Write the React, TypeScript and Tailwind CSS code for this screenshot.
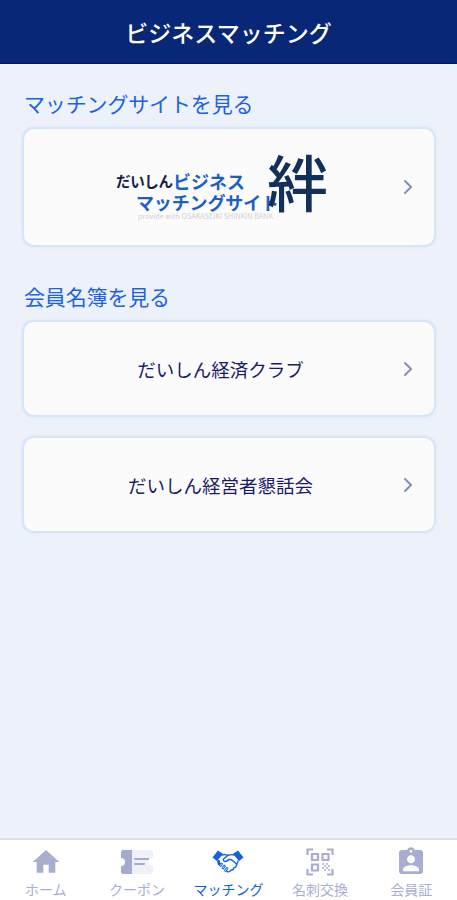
import React from "react";
import { ChevronRight } from "lucide-react";
import { MdHome, MdAssignmentInd } from "react-icons/md";

const CouponIcon = () => (
  <svg width="34" height="26" viewBox="0 0 34 26">
    <path d="M12 1h19a2 2 0 0 1 2 2v6a4 4 0 0 0 0 8v6a2 2 0 0 1-2 2H12z" fill="#eff1f8" />
    <path d="M3 1h9v24H3a2 2 0 0 1-2-2v-6a4 4 0 0 0 0-8V3a2 2 0 0 1 2-2z" fill="#a3acd0" />
    <path d="M15 10h13M15 15h9" stroke="#a3acd0" strokeWidth="2" strokeLinecap="round" />
  </svg>
);

const HandshakeIcon = () => (
  <svg width="32" height="24" viewBox="0 0 32 24" fill="none" stroke="currentColor" strokeLinejoin="round" strokeLinecap="round">
    <path d="M6 .5 11 4 5 11 .5 7.5zM26 .5 21 4l6 7 4.500-3.500z" fill="currentColor" stroke="none" />
    <path d="M10 5c3-1.200 4 .2 6 .2s4-1.200 6-.2" strokeWidth="1.400" />
    <path d="M16 5.200 11.500 9c-.7 1.600.8 3 2.600 2.300L17 9.500c1.500-.4 2.500.2 3.500 1l4.300 3.800" strokeWidth="1.500" />
    <path d="M26 11c-.2 1.500-.7 2.600-1.500 3.500.3 2-1 3-2.500 3.200-.5 1.800-1.700 2.500-3 2.500-1 1.500-2.500 2-4 1.300" strokeWidth="1.400" />
    <path d="M6.500 11 7 14M8.500 15.500l1-1.500M11 18l1.500-2M13.500 20.500l1.500-2" strokeWidth="2.700" />
    <path d="M8.500 15.500l1-1.500M11 18l1.500-2M13.500 20.500l1.500-2" stroke="white" strokeWidth=".8" />
  </svg>
);

const QrIcon = () => (
  <svg width="28" height="28" viewBox="0 0 28 28" fill="none" stroke="#a8aed0" strokeWidth="2.200">
    <path d="M1.500 7V1.500H7M21 1.500h5.500V7M26.500 21v5.500H21M7 26.500H1.500V21" />
    <path d="M6 6h6v6H6zM16.500 6h6v6h-6zM6 16.500h6v6H6z" />
    <path d="M16 16h2M20 16h2M18 18h2M22 18h2M16 20h2M20 20h2M18 22h2M22 22h2" strokeWidth="1.500" />
  </svg>
);

const tabs = [
  { label: "ホーム", icon: <MdHome className="h-8 w-8" /> },
  { label: "クーポン", icon: <CouponIcon /> },
  { label: "マッチング", icon: <HandshakeIcon />, active: true },
  { label: "名刺交換", icon: <QrIcon /> },
  { label: "会員証", icon: <MdAssignmentInd className="h-8 w-8" /> },
];

const Card = ({ className, children }: { className: string; children: React.ReactNode }) => (
  <button
    className={`relative flex w-full items-center justify-center rounded-xl border-2 border-[#d6e6fa] bg-[#fbfbfc] shadow-[0_0_3px_#d5e5fa] ${className}`}
  >
    {children}
    <ChevronRight className="absolute right-3.5 h-6 w-6 text-[#858eb8]" />
  </button>
);

export default function App() {
  return (
    <div className="flex h-screen flex-col bg-[#edf1fa] font-['Noto_Sans_CJK_JP',sans-serif]">
      <header className="flex h-16 items-center justify-center border-b border-[#061361] bg-[#082777] pt-0.5 text-[23px] font-medium text-white">
        ビジネスマッチング
      </header>

      <main className="flex-1 pt-[23px] pr-[21px] pl-[22px]">
        <h2 className="h-10 pl-0.5 text-[21px] leading-8 tracking-[-0.15px] text-[#1b63e4]">マッチングサイトを見る</h2>
        <Card className="h-[120px]">
          {/* Site logo */}
          <svg width="220" height="76" viewBox="0 0 220 76" className="mr-[9px] overflow-visible">
            <text x="1" y="38" fontSize="14.5" fontWeight="700" fill="#142045" textLength="57">だいしん</text>
            <text x="58" y="40" fontSize="18" fontWeight="700" fill="#1c60c4" textLength="72">ビジネス</text>
            <text x="21" y="61" fontSize="18" fontWeight="700" fill="#1c60c4" textLength="143">マッチングサイト</text>
            <text x="152" y="58" fontSize="61" fontWeight="500" fill="#13305a">絆</text>
            <text x="23" y="70" fontSize="7" fill="#cfcfd2" textLength="135">provide with OSAKASEIKI SHINKIN BANK</text>
          </svg>
        </Card>

        <h2 className="mt-[33px] h-10 pl-0.5 text-[21px] leading-8 tracking-[-0.15px] text-[#1b63e4]">会員名簿を見る</h2>
        <Card className="h-[97px] text-[18.5px] text-[#1b1a66]">
          <span className="mr-[17px] pt-[3px]">だいしん経済クラブ</span>
        </Card>
        <Card className="mt-[19px] h-[97px] text-[18.5px] text-[#1b1a66]">
          <span className="mr-[17px] pt-[3px]">だいしん経営者懇話会</span>
        </Card>
      </main>

      {/* Bottom tabs */}
      <nav className="grid h-[62px] grid-cols-5 border-t-2 border-[#dcdfe8] bg-white">
        {tabs.map((tab) => (
          <div
            key={tab.label}
            className={`flex flex-col items-center pt-[3px] text-sm ${tab.active ? "text-[#1260e4]" : "text-[#a8aed0]"}`}
          >
            <div className="flex h-[38px] items-center">{tab.icon}</div>
            <span className="leading-4">{tab.label}</span>
          </div>
        ))}
      </nav>
    </div>
  );
}
